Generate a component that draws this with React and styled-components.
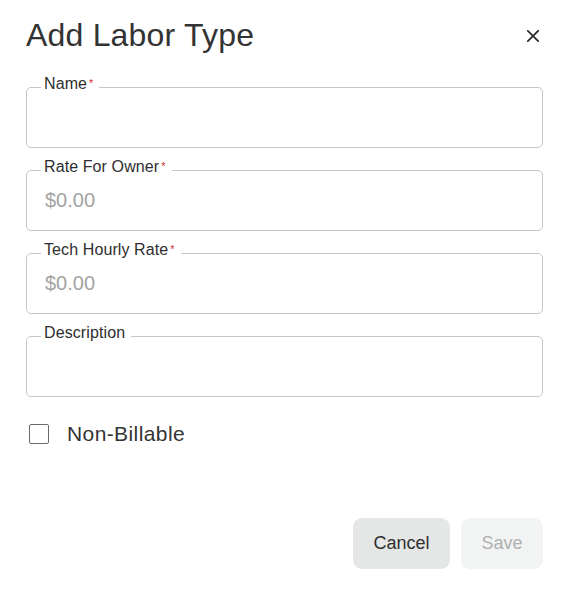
import React from "react"
import styled, { createGlobalStyle } from "styled-components"

const GlobalStyle = createGlobalStyle`
  body {
    margin: 0;
    background: #fff;
    font-family: "Liberation Sans", Arial, Helvetica, sans-serif;
    color: #333;
  }
`

const fields = [
  { label: "Name", required: true, placeholder: "" },
  { label: "Rate For Owner", required: true, placeholder: "$0.00" },
  { label: "Tech Hourly Rate", required: true, placeholder: "$0.00" },
  { label: "Description", required: false, placeholder: "" },
]

const App = () => {
  return (
    <>
      <GlobalStyle />
      <Dialog>
        <Header>
          <Title>Add Labor Type</Title>
          <CloseButton aria-label="Close">
            <svg width="12" height="12" viewBox="0 0 12 12">
              <path
                d="M0.8 0.8 L11.2 11.2 M11.2 0.8 L0.8 11.2"
                stroke="#2b2b2b"
                strokeWidth="1.7"
                strokeLinecap="square"
                fill="none"
              />
            </svg>
          </CloseButton>
        </Header>

        <Form>
          {fields.map((f) => (
            <Field key={f.label}>
              <Legend>
                <LegendText>
                  {f.label}
                  {f.required && <Required>*</Required>}
                </LegendText>
              </Legend>
              <Input placeholder={f.placeholder} />
            </Field>
          ))}
        </Form>

        <CheckRow>
          <Checkbox type="checkbox" />
          <CheckLabel>Non-Billable</CheckLabel>
        </CheckRow>

        <Actions>
          <Button>Cancel</Button>
          <Button disabled>Save</Button>
        </Actions>
      </Dialog>
    </>
  )
}

const Dialog = styled.div`
  width: 570px;
  box-sizing: border-box;
  padding: 17px 27px 20px 26px;
`

const Header = styled.div`
  display: flex;
  align-items: center;
  justify-content: space-between;
`

const Title = styled.h2`
  margin: 0;
  font-size: 32px;
  line-height: 37px;
  font-weight: 400;
  color: #333;
  letter-spacing: 0.2px;
`

const CloseButton = styled.button`
  display: flex;
  align-items: center;
  justify-content: center;
  background: none;
  border: none;
  padding: 4px;
  margin: 0;
  cursor: pointer;
`

const Form = styled.div`
  display: flex;
  flex-direction: column;
  gap: 13px;
  margin-top: 24px;
`

const Field = styled.fieldset`
  margin: 0;
  padding: 0 14px 8px 14px;
  border: 1px solid #c6c6c6;
  border-radius: 5px;
  min-width: 0;
`

const Legend = styled.legend`
  padding: 0 6px 0 3px;
  font-size: 16px;
  line-height: 18px;
  letter-spacing: 0.1px;
  color: #2e2e2e;
`

const LegendText = styled.span`
  position: relative;
  top: -3px;
`

const Required = styled.span`
  color: #d32f2f;
  font-size: 11px;
  vertical-align: top;
  margin-left: 2px;
  position: relative;
  top: -1px;
`

const Input = styled.input`
  display: block;
  width: 100%;
  box-sizing: border-box;
  height: 43px;
  padding: 0 4px;
  border: none;
  outline: none;
  background: transparent;
  font-family: inherit;
  font-size: 20px;
  color: #333;

  &::placeholder {
    color: #a3a3a3;
  }
`

const CheckRow = styled.label`
  display: flex;
  align-items: center;
  gap: 18px;
  margin-top: 25px;
  height: 24px;
  padding-left: 3px;
`

const Checkbox = styled.input`
  appearance: none;
  margin: 0;
  width: 20px;
  height: 20px;
  box-sizing: border-box;
  border: 1.5px solid #6a6a6a;
  border-radius: 2px;
  background: #fff;
`

const CheckLabel = styled.span`
  font-size: 21px;
  line-height: 24px;
  letter-spacing: 0.4px;
  color: #333;
`

const Actions = styled.div`
  display: flex;
  justify-content: flex-end;
  gap: 11px;
  margin-top: 72px;
`

const Button = styled.button`
  height: 51px;
  padding: 0 20.5px;
  border: none;
  border-radius: 9px;
  font-family: inherit;
  font-size: 18px;
  background: #e5e6e6;
  color: #2e2e2e;
  cursor: pointer;

  &:disabled {
    background: #f2f3f3;
    color: #aeb1b1;
    cursor: default;
  }
`

export default App
